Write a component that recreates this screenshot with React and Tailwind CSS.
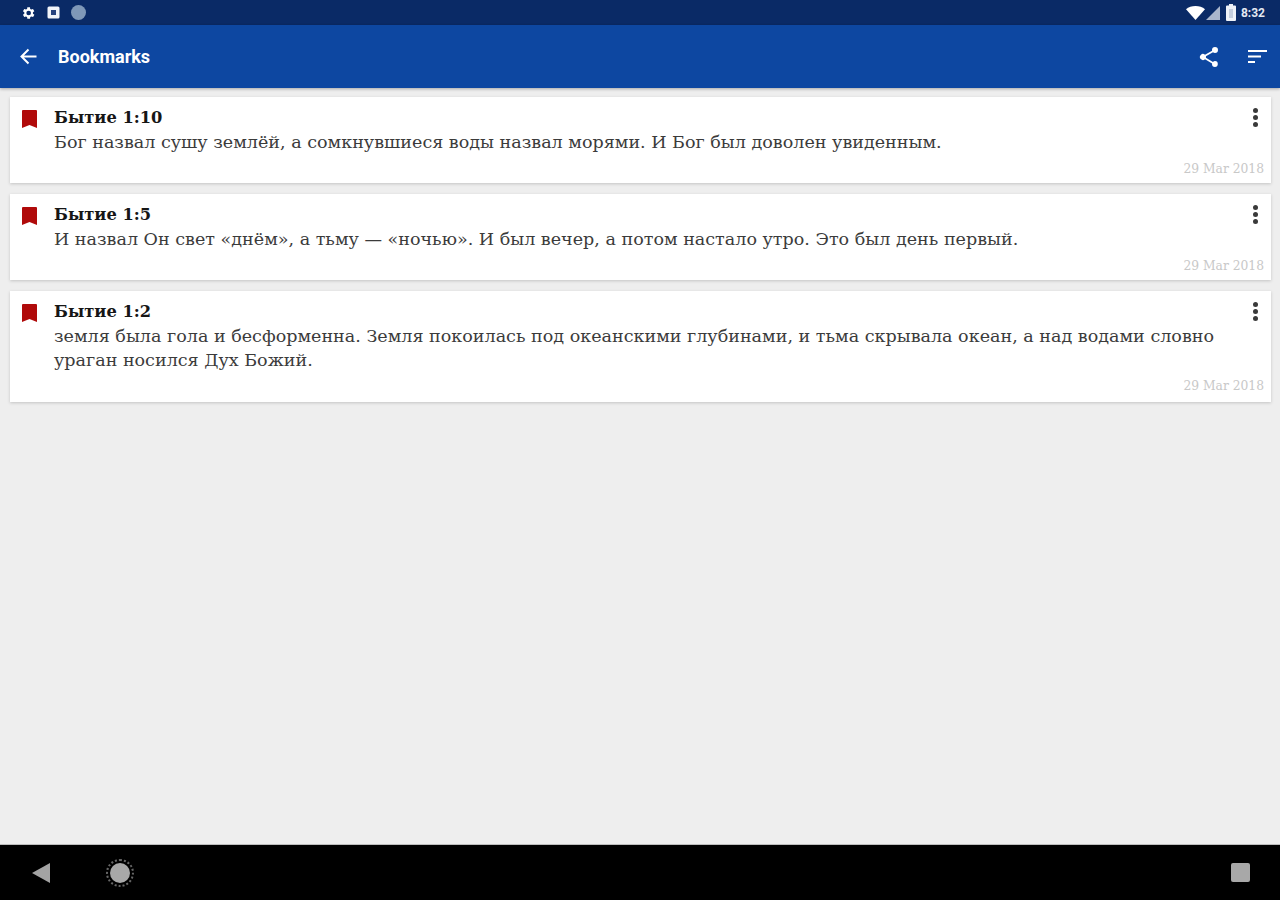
const serif = "font-['DejaVu_Serif','Liberation_Serif',serif]";

const bookmarks = [
  {
    id: 1,
    ref: "Бытие 1:10",
    text: "Бог назвал сушу землёй, а сомкнувшиеся воды назвал морями. И Бог был доволен увиденным.",
    height: "h-[86px]",
    dateGap: "mb-[6px]",
  },
  {
    id: 2,
    ref: "Бытие 1:5",
    text: "И назвал Он свет «днём», а тьму — «ночью». И был вечер, а потом настало утро. Это был день первый.",
    height: "h-[86px]",
    dateGap: "mb-[6px]",
  },
  {
    id: 3,
    ref: "Бытие 1:2",
    text: "земля была гола и бесформенна. Земля покоилась под океанскими глубинами, и тьма скрывала океан, а над водами словно ураган носился Дух Божий.",
    height: "h-[111px]",
    dateGap: "mb-[8px]",
  },
];

function StatusBar() {
  return (
    <div className="flex h-[25px] items-center justify-between bg-[#0a2a66] pl-[20px] pr-[15px]">
      <div className="flex items-center gap-[11px]">
        <svg width="16" height="16" viewBox="0 0 24 24" fill="#fff">
          <path d="M19.4 13a7.5 7.5 0 0 0 0-2l2.1-1.6-2-3.5-2.5 1a7.6 7.6 0 0 0-1.7-1L15 3.2h-4l-.4 2.7a7.6 7.6 0 0 0-1.7 1l-2.5-1-2 3.5L6.5 11a7.5 7.5 0 0 0 0 2l-2.1 1.600 2 3.500 2.500-1c.5.4 1.100.7 1.700 1l.4 2.700h4l.4-2.700c.6-.3 1.200-.6 1.700-1l2.500 1 2-3.500ZM13 15.500a3.500 3.500 0 1 1 0-7 3.500 3.500 0 0 1 0 7Z" />
        </svg>
        <svg width="13" height="13" viewBox="0 0 13 13">
          <rect x="0.5" y="0.5" width="12" height="12" rx="1.5" fill="#f2f5fa" />
          <rect x="4" y="4" width="5" height="5" fill="#27447f" />
        </svg>
        <div className="h-[15px] w-[15px] rounded-full bg-[#7f98b8]" />
      </div>
      <div className="flex items-center">
        <svg width="19" height="14" viewBox="0 0 19 14" fill="#fff">
          <path d="M0 3.200C2.500 1.200 5.800 0 9.500 0S16.500 1.200 19 3.200L9.500 14Z" />
        </svg>
        <svg className="ml-[1px]" width="14" height="14" viewBox="0 0 14 14" fill="#aab6cc">
          <path d="M14 0v14H0Z" />
        </svg>
        <svg className="ml-[6px]" width="10" height="17" viewBox="0 0 10 17" fill="#eef2f8">
          <path d="M3 0h4v1.500h2a1 1 0 0 1 1 1V16a1 1 0 0 1-1 1H1a1 1 0 0 1-1-1V2.500a1 1 0 0 1 1-1h2Z" />
          <rect x="3" y="5" width="4" height="9" fill="#c4cede" />
        </svg>
        <span className="ml-[5px] font-['Roboto',sans-serif] text-[12px] font-bold leading-none text-[#e4e9f2]">8:32</span>
      </div>
    </div>
  );
}

function AppBar() {
  return (
    <div className="relative z-10 flex h-[63px] items-center bg-[#0d47a1] pl-[19px] pr-[13px] shadow-[0_1px_3px_rgba(0,0,0,0.3)]">
      <svg width="19" height="19" viewBox="0 0 19 19" fill="none" stroke="#fff" strokeWidth="2">
        <path d="M17.500 9.500H3M9.500 2.500l-7 7 7 7" />
      </svg>
      <span className="ml-[20px] font-['Roboto',sans-serif] text-[18px] font-bold leading-none text-white">Bookmarks</span>
      <div className="ml-auto flex items-center gap-[27px]">
        <svg width="24" height="24" viewBox="0 0 24 24" fill="#fff">
          <path d="M18 16.100c-.8 0-1.500.3-2 .8l-7.100-4.200c.1-.2.100-.5.100-.7s0-.5-.1-.7L16 7.200c.5.500 1.200.8 2 .8a3 3 0 1 0-3-3c0 .2 0 .5.100.7L8 9.800a3 3 0 1 0 0 4.400l7.100 4.200c-.1.200-.1.400-.1.600a2.900 2.900 0 1 0 3-2.900Z" />
        </svg>
        <svg width="19" height="15" viewBox="0 0 19 15" fill="#fff">
          <rect x="0" y="1" width="19" height="2" />
          <rect x="0" y="6.500" width="13" height="2" />
          <rect x="0" y="12" width="7" height="2" />
        </svg>
      </div>
    </div>
  );
}

function BookmarkCard({ item }) {
  return (
    <div className={`flex ${item.height} bg-white shadow-[0_1px_3px_rgba(0,0,0,0.18)]`}>
      <div className="w-[44px] shrink-0 pl-[12px] pt-[13px]">
        <svg width="15" height="18" viewBox="0 0 15 18" fill="#b00a0a">
          <path d="M1 0h13a1 1 0 0 1 1 1v17l-7.500-3L0 18V1a1 1 0 0 1 1-1Z" />
        </svg>
      </div>
      <div className={`min-w-0 flex-1 pt-[9px] ${serif}`}>
        <div className="text-[16.300px] font-bold leading-[24px] text-[#161616]">{item.ref}</div>
        <p className="text-[17.550px] leading-[24px] text-[#3b3b3b]">{item.text}</p>
      </div>
      <div className="flex w-[44px] shrink-0 flex-col items-end pr-[7px] pt-[11px]">
        <div className="mr-[6px] flex flex-col gap-[2px]">
          <span className="h-[5px] w-[5px] rounded-full bg-[#3a3a3a]" />
          <span className="h-[5px] w-[5px] rounded-full bg-[#3a3a3a]" />
          <span className="h-[5px] w-[5px] rounded-full bg-[#3a3a3a]" />
        </div>
        <span className={`mt-auto ${item.dateGap} whitespace-nowrap text-[12.300px] leading-[16px] text-[#c8c8c8] ${serif}`}>29 Mar 2018</span>
      </div>
    </div>
  );
}

function NavBar() {
  return (
    <div className="flex h-[56px] items-center justify-between border-t border-[#bdbdbd] bg-black pl-[32px] pr-[30px]">
      <div className="flex items-center gap-[56px]">
        <svg width="18" height="20" viewBox="0 0 18 20" fill="#a3a3a3">
          <path d="M18 0v20L0 10Z" />
        </svg>
        <div className="flex h-[28px] w-[28px] items-center justify-center rounded-full border-2 border-dotted border-[#666]">
          <div className="h-[20px] w-[20px] rounded-full bg-[#a8a8a8]" />
        </div>
      </div>
      <div className="h-[19px] w-[19px] rounded-[2px] bg-[#a8a8a8]" />
    </div>
  );
}

export default function App() {
  return (
    <div className="flex h-[900px] w-[1280px] flex-col overflow-hidden bg-[#eeeeee]">
      <StatusBar />
      <AppBar />
      <div className="flex flex-1 flex-col gap-[11px] pl-[10px] pr-[9px] pt-[9px]">
        {bookmarks.map((item) => (
          <BookmarkCard key={item.id} item={item} />
        ))}
      </div>
      <NavBar />
    </div>
  );
}
